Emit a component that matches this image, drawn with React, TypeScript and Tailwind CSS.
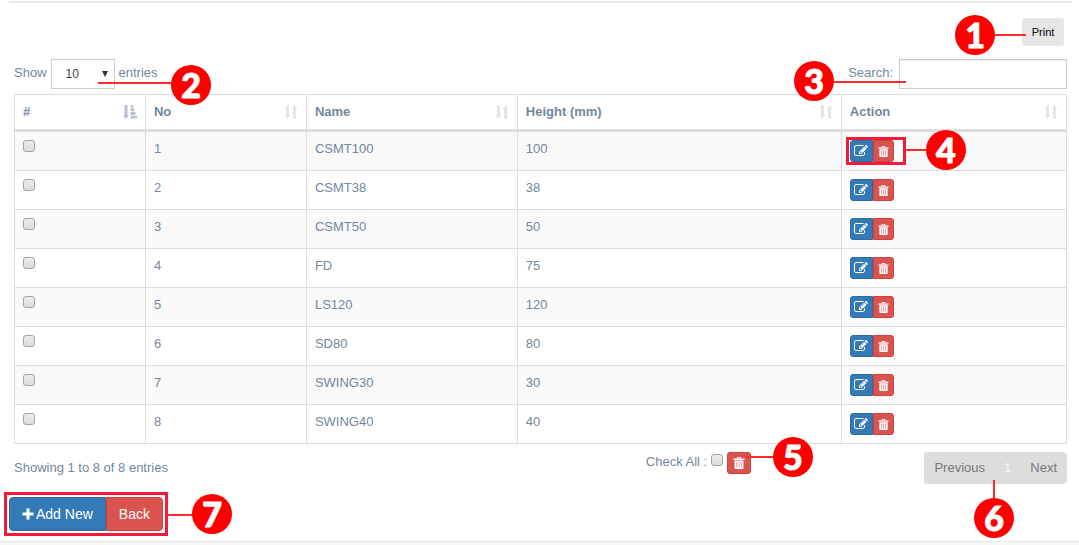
import React from "react";

type Row = { no: number; name: string; height: number };

const rows: Row[] = [
  { no: 1, name: "CSMT100", height: 100 },
  { no: 2, name: "CSMT38", height: 38 },
  { no: 3, name: "CSMT50", height: 50 },
  { no: 4, name: "FD", height: 75 },
  { no: 5, name: "LS120", height: 120 },
  { no: 6, name: "SD80", height: 80 },
  { no: 7, name: "SWING30", height: 30 },
  { no: 8, name: "SWING40", height: 40 },
];

const columns = [
  { label: "#", width: "w-[12.45%]" },
  { label: "No", width: "w-[15.3%]" },
  { label: "Name", width: "w-[20.05%]" },
  { label: "Height (mm)", width: "w-[30.8%]" },
  { label: "Action", width: "w-[21.4%]" },
];

function Badge({ n, place }: { n: number; place: string }) {
  return (
    <span
      className={`pointer-events-none absolute z-20 flex size-10 items-center justify-center rounded-full bg-[#ff0000] font-['Lato',sans-serif] text-[34px] leading-none font-black text-white [-webkit-text-stroke:1px_white] ${place}`}
    >
      {n}
    </span>
  );
}

function Lead({ place }: { place: string }) {
  return <span className={`pointer-events-none absolute z-10 bg-[#ff2a2a] ${place}`} />;
}

function SortIcon({ active }: { active: boolean }) {
  return active ? (
    <svg viewBox="0 0 14 14" className="size-3.5 shrink-0 fill-[#b9c3cf]">
      <path d="M1.500 0h3v10H6l-3 4-3-4h1.500zM7.500 0h3v2.500h-3zM7.500 3.200h4v3h-4zM7.500 7h5v3h-5zM7.500 10.700H14V13.500H7.500z" />
    </svg>
  ) : (
    <svg viewBox="0 0 14 14" className="size-3.5 shrink-0 fill-[#e3e6eb]">
      <path d="M2 0h3v10h1.500l-3 4-3-4H2zM9 14h3V4h1.500l-3-4-3 4H9z" />
    </svg>
  );
}

function EditIcon() {
  return (
    <svg viewBox="0 0 1792 1792" className="size-3.5 fill-white" aria-hidden="true">
      <path d="M888 1184l116-116-152-152-116 116v56h96v96h56zm440-720q-16-16-33 1l-350 350q-17 17-1 33t33-1l350-350q17-17 1-33zm80 594v190q0 119-84.500 203.500t-203.500 84.500h-832q-119 0-203.500-84.500t-84.500-203.500v-832q0-119 84.500-203.500t203.500-84.500h832q63 0 117 25 15 7 18 23 3 17-9 29l-49 49q-14 14-32 8-23-6-45-6h-832q-66 0-113 47t-47 113v832q0 66 47 113t113 47h832q66 0 113-47t47-113v-126q0-13 9-22l64-64q15-15 35-7t20 29zm-96-738l288 288-672 672h-288v-288zm444 132l-92 92-288-288 92-92q28-28 68-28t68 28l152 152q28 28 28 68t-28 68z" />
    </svg>
  );
}

function Trash({ size }: { size: string }) {
  return (
    <svg viewBox="0 0 12 12" className={`fill-white ${size}`} aria-hidden="true">
      <path
        fillRule="evenodd"
        d="M4 0h4v1.500h3.500V3H.5V1.500H4zM5 .8v.7h2V.8zM1.500 3.500h9V11q0 1-1 1h-7q-1 0-1-1zM3.500 5v5.500h.6V5zM5.700 5v5.500h.6V5zM7.900 5v5.500h.6V5z"
      />
    </svg>
  );
}

function Check({ label, id }: { label: string; id: string }) {
  return (
    <input
      id={id}
      type="checkbox"
      aria-label={label}
      className="block size-3 appearance-none rounded-[3px] border border-[#a3a3a3] bg-linear-to-b from-[#ececec] to-[#dcdcdc] checked:bg-[#337ab7]"
    />
  );
}

export default function App() {
  return (
    <div className="overflow-x-hidden bg-white pt-px font-['Liberation_Sans',Arial,sans-serif] text-[13px] leading-[18px] text-[#73879c]">
      <hr className="mr-[7px] ml-[9px] border-t-2 border-[#e6e9ed]" />
      <main className="pr-3 pl-3.5">
        <div className="flex justify-end pt-[15px] pr-[3px]">
          <div className="relative">
            <button className="block h-7 w-[42px] rounded-[3px] bg-[#e6e6e6] text-[11px] text-black">Print</button>
            <Badge n={1} place="right-[69px] -top-[3px]" />
            <Lead place="right-[38px] top-4 h-0.5 w-8" />
          </div>
        </div>

        <div className="flex justify-between pt-[13px] pb-[5px]">
          <label className="relative flex h-[30px] items-center gap-1 pb-[3px]">
            Show
            <span className="relative -mb-[3px] block">
              <select className="block h-[30px] w-16 appearance-none border border-[#ccc] bg-white pl-3.5 text-[12px] text-[#444]">
                <option>10</option>
                <option>25</option>
                <option>50</option>
                <option>100</option>
              </select>
              <svg viewBox="0 0 6 6" className="pointer-events-none absolute top-3 right-[7px] size-1.5 fill-[#333]">
                <path d="M0 0h6L3 6z" />
              </svg>
            </span>
            entries
            <Badge n={2} place="left-[157px] top-1.5" />
            <Lead place="left-[84px] top-[23px] h-0.5 w-20" />
          </label>
          <label className="relative flex h-[30px] items-center gap-1.5 pb-[3px]">
            Search:
            <input type="search" className="-mb-[3px] h-[30px] w-[168px] border border-[#ccc] bg-white px-2 shadow-[inset_0_1px_1px_rgba(0,0,0,0.075)]" />
            <Badge n={3} place="right-[233px] top-0.5" />
            <Lead place="right-[161px] top-[22px] h-0.5 w-[73px]" />
          </label>
        </div>

        <table className="w-full table-fixed border-collapse border border-[#ddd]">
          <thead>
            <tr className="h-9 border-b-3 border-[#ddd]">
              {columns.map((c, i) => (
                <th key={c.label} className={`border-r border-[#ddd] px-2 text-left font-bold ${c.width}`}>
                  <span className="flex items-center justify-between">
                    {c.label}
                    <SortIcon active={i === 0} />
                  </span>
                </th>
              ))}
            </tr>
          </thead>
          <tbody>
            {rows.map((r, i) => (
              <tr key={r.no} className="h-[39px] border-b border-[#ddd] align-top odd:bg-[#f9f9f9] first:h-10">
                <td className="border-r border-[#ddd] p-2">
                  <Check id={`row-${r.no}`} label={`Select ${r.name}`} />
                </td>
                <td className="border-r border-[#ddd] px-2 pt-2">{r.no}</td>
                <td className="border-r border-[#ddd] px-2 pt-2">{r.name}</td>
                <td className="border-r border-[#ddd] px-2 pt-2">{r.height}</td>
                <td className="px-2 pt-2">
                  <div className="relative flex w-fit">
                    {i === 0 && (
                      <>
                        <span className="absolute -top-[3px] -left-1 h-7 w-[60px] border-3 border-[#f8193a] bg-white" />
                        <Lead place="left-14 top-[9px] h-0.5 w-6" />
                        <Badge n={4} place="left-[76px] -top-2.5" />
                      </>
                    )}
                    <button aria-label={`Edit ${r.name}`} className="relative flex h-[22px] w-[23px] items-center justify-center rounded-l-[3px] border border-[#2e6da4] bg-[#337ab7]">
                      <EditIcon />
                    </button>
                    <button aria-label={`Delete ${r.name}`} className="relative flex h-[22px] w-[21px] items-center justify-center rounded-r-[3px] border border-[#d43f3a] bg-[#d9534f]">
                      <Trash size="size-[11px]" />
                    </button>
                  </div>
                </td>
              </tr>
            ))}
          </tbody>
        </table>

        <div className="grid grid-cols-[60%_1fr_auto] items-start pt-2">
          <p className="pt-[7px]">Showing 1 to 8 of 8 entries</p>
          <div className="relative flex items-start gap-1">
            <label htmlFor="check-all" className="pt-px">Check All :</label>
            <span className="pt-0.5">
              <Check id="check-all" label="Check All" />
            </span>
            <button aria-label="Delete checked" className="flex h-[22px] w-6 items-center justify-center rounded-[3px] border border-[#d43f3a] bg-[#d9534f]">
              <Trash size="size-3" />
            </button>
            <Badge n={5} place="left-[127px] -top-[15px]" />
            <Lead place="left-[100px] top-1 h-0.5 w-[30px]" />
          </div>
          <nav className="relative flex h-8 items-center rounded-[4px] bg-[#ddd] text-[#777]">
            <a href="#previous" className="px-2.5">Previous</a>
            <a href="#page-1" className="-ml-px px-2.5 text-[#f5f5f5]">1</a>
            <a href="#next" className="-ml-px px-2.5">Next</a>
            <Badge n={6} place="right-[53px] top-[46px]" />
            <Lead place="right-[72px] top-7 h-5 w-0.5" />
          </nav>
        </div>

        <div className="relative mt-2 -ml-2.5 flex w-fit border-3 border-[#f8193a] p-0.5 text-[14px] leading-5 text-white">
          <button className="flex h-[34px] items-center gap-0.5 rounded-l-[4px] border border-[#2e6da4] bg-[#337ab7] px-3">
            <svg viewBox="0 0 12 12" className="size-3 fill-white">
              <path d="M4.500 .5h3v4h4v3h-4v4h-3v-4h-4v-3h4z" />
            </svg>
            Add New
          </button>
          <button className="h-[34px] rounded-r-[4px] border border-[#d43f3a] bg-[#d9534f] px-3">Back</button>
          <Badge n={7} place="left-[185px] -top-px" />
          <Lead place="left-[160px] top-[19px] h-0.5 w-7" />
        </div>
      </main>
      <footer className="mt-[5px] h-1 border-t border-[#e7e7e7] bg-[#f7f7f7]" />
    </div>
  );
}
